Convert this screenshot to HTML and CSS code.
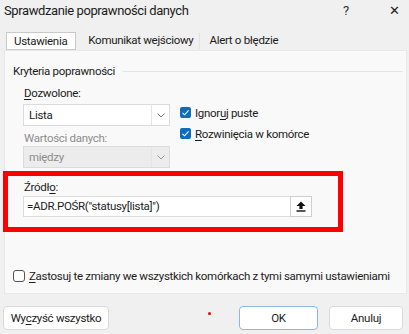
FILE: index.html
```html
<!DOCTYPE html>
<html lang="pl">
<head>
    <meta charset="UTF-8">
    <meta name="viewport" content="width=device-width, initial-scale=1.0">
    <title>Sprawdzanie poprawności danych</title>
    <link rel="stylesheet" href="styles.css">
</head>
<body>
    <div class="dialog">
        <div class="titlebar">
            <span class="title">Sprawdzanie poprawności danych</span>
            <span class="help">?</span>
            <span class="close">✕</span>
        </div>

        <div class="tabs">
            <div class="tab active">Ustawienia</div>
            <div class="tab">Komunikat wejściowy</div>
            <div class="tab-sep"></div>
            <div class="tab">Alert o błędzie</div>
        </div>

        <div class="panel">
            <div class="group-title">
                <span>Kryteria poprawności</span>
                <span class="group-line"></span>
            </div>

            <div class="criteria">
                <div class="col-left">
                    <div class="field-label"><u>D</u>ozwolone:</div>
                    <div class="select">
                        <span class="select-value">Lista</span>
                        <span class="select-btn">
                            <svg width="8" height="5" viewBox="0 0 8 5"><path d="M0.5 0.5 L4 4 L7.5 0.5" fill="none" stroke="#777" stroke-width="1"/></svg>
                        </span>
                    </div>
                    <div class="field-label disabled">Wartości danych:</div>
                    <div class="select disabled">
                        <span class="select-value">między</span>
                        <span class="select-btn">
                            <svg width="8" height="5" viewBox="0 0 8 5"><path d="M0.5 0.5 L4 4 L7.5 0.5" fill="none" stroke="#999" stroke-width="1"/></svg>
                        </span>
                    </div>
                </div>
                <div class="col-right">
                    <div class="check-row">
                        <span class="checkbox checked">
                            <svg width="11" height="11" viewBox="0 0 11 11"><path d="M2.5 5.8 L4.6 7.8 L8.6 3.4" fill="none" stroke="#fff" stroke-width="1.1"/></svg>
                        </span>
                        <span>Ignor<u>u</u>j puste</span>
                    </div>
                    <div class="check-row">
                        <span class="checkbox checked">
                            <svg width="11" height="11" viewBox="0 0 11 11"><path d="M2.5 5.8 L4.6 7.8 L8.6 3.4" fill="none" stroke="#fff" stroke-width="1.1"/></svg>
                        </span>
                        <span><u>R</u>ozwinięcia w komórce</span>
                    </div>
                </div>
            </div>

            <div class="source-box">
                <div class="field-label">Źródł<u>o</u>:</div>
                <div class="source-input">
                    <span class="source-text">=ADR.POŚR("statusy[lista]")</span>
                    <span class="ref-btn">
                        <svg width="10" height="11" viewBox="0 0 10 11">
                            <path d="M5 0.5 L9.5 5 L6.6 5 L6.6 8 L3.4 8 L3.4 5 L0.5 5 Z" fill="#111"/>
                            <rect x="0.5" y="9.3" width="9" height="1.4" fill="#111"/>
                        </svg>
                    </span>
                </div>
            </div>

            <div class="apply-row">
                <span class="checkbox"></span>
                <span><u>Z</u>astosuj te zmiany we wszystkich komórkach z tymi samymi ustawieniami</span>
            </div>
        </div>

        <div class="footer">
            <button class="btn">Wy<u>c</u>zyść wszystko</button>
            <span class="dot"></span>
            <button class="btn ok">OK</button>
            <button class="btn cancel">Anuluj</button>
        </div>
    </div>
</body>
</html>
```

FILE: styles.css
```css
* {
    margin: 0;
    padding: 0;
    box-sizing: border-box;
}

body {
    font-family: Roboto, "Noto Sans", sans-serif;
    font-size: 11.5px;
    letter-spacing: -0.3px;
    color: #1b1b1b;
    background: #f0f0f0;
    width: 409px;
    height: 334px;
    overflow: hidden;
}

.dialog {
    position: relative;
    height: 334px;
}

u {
    text-decoration-thickness: 1px;
    text-underline-offset: 2px;
}

/* title bar */
.titlebar {
    display: flex;
    align-items: center;
    height: 20px;
    padding-left: 4px;
}

.title {
    font-size: 13px;
    letter-spacing: -0.4px;
    flex: 1;
}

.help {
    font-size: 13px;
    color: #333;
    width: 46px;
}

.close {
    font-size: 13px;
    color: #222;
    width: 20px;
}

/* tabs */
.tabs {
    display: flex;
    align-items: center;
    margin-top: 12px;
    height: 18px;
    padding-left: 6px;
}

.tab {
    height: 18px;
    line-height: 16px;
    padding: 0 6px 0 12px;
}

.tab.active {
    background: #fff;
    border: 1px solid #c9c9c9;
    padding: 0 8px 0 7px;
}

.tab-sep {
    width: 1px;
    height: 16px;
    background: #e2e2e2;
    margin-right: -3px;
}

/* panel */
.panel {
    margin: 0 2px 0 4px;
    height: 244px;
    background: #f9f9f9;
    border: 1px solid #e8e8e8;
    padding-top: 12px;
}

.group-title {
    display: flex;
    align-items: center;
    height: 16px;
    padding-left: 8px;
    margin-right: 3px;
}

.group-line {
    flex: 1;
    height: 1px;
    background: #e3e3e3;
    margin-left: 8px;
}

.criteria {
    display: flex;
    margin-top: 6px;
    padding-left: 18px;
}

.col-left {
    width: 147px;
}

.field-label {
    height: 16px;
    line-height: 16px;
    padding-left: 1px;
}

.field-label.disabled {
    color: #8c8c8c;
    margin-top: 4px;
}

.select {
    display: flex;
    height: 22px;
    margin-top: 3px;
    background: #fff;
    border: 1px solid #dcdcdc;
}

.select.disabled {
    background: #ececec;
    color: #8c8c8c;
    margin-top: 0;
}

.select-value {
    flex: 1;
    line-height: 20px;
    padding-left: 5px;
}

.select-btn {
    width: 18px;
    border-left: 1px solid #e4e4e4;
    display: flex;
    align-items: center;
    justify-content: center;
}

.col-right {
    padding-top: 17px;
    margin-left: 10px;
}

.check-row,
.apply-row {
    display: flex;
    align-items: center;
    height: 21px;
    white-space: nowrap;
}

.checkbox {
    width: 11px;
    height: 11px;
    border: 1px solid #5a5a5a;
    border-radius: 2px;
    background: #fff;
    margin-right: 4px;
    flex-shrink: 0;
    display: flex;
}

.checkbox.checked {
    background: #0f6cbd;
    border: none;
}

/* highlighted source field */
.source-box {
    margin: 3px 0 0 -2px;
    width: 340px;
    height: 61px;
    border: 5px solid #f00;
    padding: 3px 0 0 15px;
}

.source-input {
    display: flex;
    width: 289px;
    height: 21px;
    margin-top: 1px;
    background: #fff;
    border: 1px solid #dcdcdc;
}

.source-text {
    flex: 1;
    line-height: 19px;
    padding-left: 3px;
}

.ref-btn {
    width: 22px;
    display: flex;
    align-items: center;
    justify-content: center;
    margin: -1px -1px -1px 0;
    border: 1px solid #cfcfcf;
}

.apply-row {
    margin-top: 33px;
    padding-left: 8px;
}

.apply-row .checkbox {
    width: 12px;
    height: 12px;
    border-color: #555;
    border-radius: 3px;
}

/* footer buttons */
.footer {
    display: flex;
    align-items: center;
    padding: 12px 6px 0 3px;
}

.btn {
    font-family: inherit;
    font-size: 11.5px;
    letter-spacing: -0.3px;
    color: #1b1b1b;
    height: 24px;
    background: #fff;
    border: 1px solid #d9d9d9;
    border-radius: 4px;
}

.btn:first-child {
    width: 106px;
}

.btn.ok {
    margin-left: auto;
    width: 79px;
    border-color: #8db6e2;
}

.btn.cancel {
    width: 74px;
    margin-left: 11px;
}

.dot {
    position: absolute;
    left: 208px;
    top: 312px;
    width: 3px;
    height: 3px;
    border-radius: 50%;
    background: #e00;
}
```
